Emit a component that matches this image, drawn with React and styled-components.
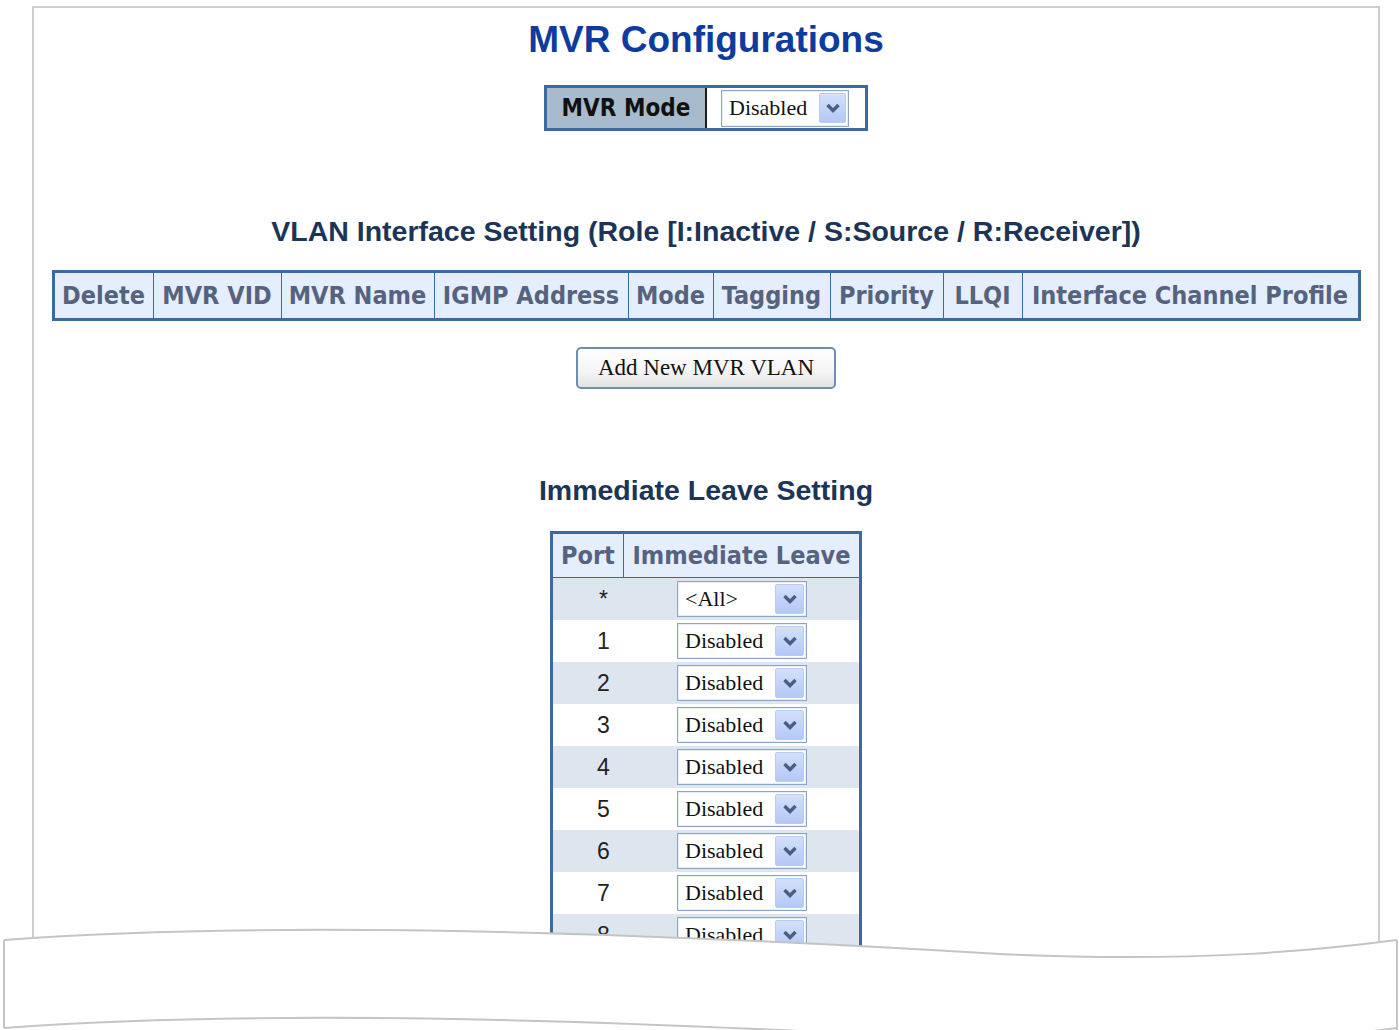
import React from 'react';
import styled, { createGlobalStyle } from 'styled-components';

const GlobalStyle = createGlobalStyle`
  html, body {
    margin: 0;
    padding: 0;
    background: #ffffff;
  }
`;

const Page = styled.div`
  position: relative;
  width: 1399px;
  height: 1030px;
  overflow: hidden;
  background: #fff;
`;

const Frame = styled.div`
  box-sizing: border-box;
  margin: 6px 0 0 32px;
  width: 1348px;
  height: 1100px;
  border: 2px solid #cdcdcd;
  border-bottom: none;
  display: flex;
  flex-direction: column;
  align-items: center;
`;

const Title = styled.h1`
  margin: 12px 0 0;
  font-family: "Liberation Sans", Arial, sans-serif;
  font-size: 37px;
  line-height: 40px;
  font-weight: bold;
  color: #0d3c9e;
`;

const SectionTitle = styled.h2`
  margin: ${p => p.$top}px 0 0;
  font-family: "Liberation Sans", Arial, sans-serif;
  font-size: 28.5px;
  line-height: 32px;
  font-weight: bold;
  color: #1c3557;
`;

const headFont = `
  font-family: "DejaVu Sans Condensed", "DejaVu Sans", sans-serif;
  font-stretch: condensed;
  font-weight: bold;
  font-size: 25px;
`;

const ModeTable = styled.div`
  margin-top: 25px;
  display: flex;
  height: 46px;
  box-sizing: border-box;
  border: 3px solid #3a6aa0;
`;

const ModeLabel = styled.div`
  font-family: "DejaVu Sans Condensed", "DejaVu Sans", sans-serif;
  font-stretch: condensed;
  font-weight: bold;
  font-size: 24px;
  width: 158px;
  background: #a8bbcc;
  color: #111;
  border-right: 2px solid #1e1e1e;
  display: flex;
  align-items: center;
  justify-content: center;
`;

const ModeValue = styled.div`
  width: 158px;
  box-sizing: border-box;
  padding-left: 14px;
  display: flex;
  align-items: center;
  background: #fff;
`;

const SelectBox = styled.div`
  box-sizing: border-box;
  width: ${p => p.$w}px;
  height: ${p => p.$h}px;
  border: 1px solid #8aa6c4;
  box-shadow: inset 0 0 0 1px #e9eef5;
  background: #fff;
  display: flex;
  align-items: center;
  justify-content: space-between;
  padding: 0 2px 0 7px;
  font-family: "Liberation Serif", "Times New Roman", serif;
  font-size: 22px;
  color: #111;
`;

const ArrowButton = styled.span`
  box-sizing: border-box;
  width: ${p => p.$w}px;
  height: 30px;
  border: 1px solid #b9cbee;
  border-radius: 2px;
  background: linear-gradient(#d3e0fb, #b3c8f5);
  display: flex;
  align-items: center;
  justify-content: center;
`;

const Chevron = () => (
  <svg width="16" height="12" viewBox="0 0 16 12">
    <path d="M2.5 3 L8 8.5 L13.5 3" fill="none" stroke="#4a5d82" strokeWidth="3.4" />
  </svg>
);

const Select = ({ value, w = 130, h = 36, aw = 29 }) => (
  <SelectBox $w={w} $h={h}>
    <span>{value}</span>
    <ArrowButton $w={aw}>
      <Chevron />
    </ArrowButton>
  </SelectBox>
);

const VlanTable = styled.div`
  margin-top: 23px;
  box-sizing: border-box;
  width: 1309px;
  height: 51px;
  border: 3px solid #3a6aa0;
  display: grid;
  grid-template-columns: 98px 127px 152px 193px 84px 116px 112px 78px 335px;
  gap: 1px;
  background: #3a6aa0;
`;

const HeadCell = styled.div`
  ${headFont}
  background: #e4eefc;
  color: #56637f;
  display: flex;
  align-items: center;
  justify-content: center;
  white-space: nowrap;
`;

const AddButton = styled.button`
  margin-top: 26px;
  width: 260px;
  height: 42px;
  border: 2px solid #6f8db3;
  border-radius: 5px;
  background: linear-gradient(#ffffff 0%, #f4f4f4 60%, #e3e3e3 100%);
  font-family: "Liberation Serif", "Times New Roman", serif;
  font-size: 23px;
  color: #111;
  padding: 0;
`;

const LeaveTable = styled.div`
  margin-top: 25px;
  box-sizing: border-box;
  width: 312px;
  border: 3px solid #3a6aa0;
  border-bottom: none;
`;

const LeaveHead = styled.div`
  display: grid;
  grid-template-columns: 70px 235px;
  gap: 1px;
  height: 44px;
  background: #3a6aa0;
  border-bottom: 1px solid #3a6aa0;
  box-sizing: border-box;
`;

const LeaveRow = styled.div`
  display: grid;
  grid-template-columns: 101px 1fr;
  align-items: center;
  height: 42px;
  background: ${p => (p.$alt ? '#dde6ef' : '#ffffff')};
`;

const PortCell = styled.div`
  text-align: center;
  font-family: "Liberation Sans", Arial, sans-serif;
  font-size: 23px;
  color: #222;
`;

const SelectCell = styled.div`
  padding-left: 23px;
`;

const TornEdge = styled.svg`
  position: absolute;
  left: 0;
  top: 900px;
`;

const columns = ['Delete', 'MVR VID', 'MVR Name', 'IGMP Address', 'Mode', 'Tagging', 'Priority', 'LLQI', 'Interface Channel Profile'];

const ports = ['*', '1', '2', '3', '4', '5', '6', '7', '8'];

const topEdge = 'M4 940 C 300 918, 700 936, 1000 954 C 1200 963, 1320 950, 1397 940';
const bottomEdge = 'M4 1028 C 300 1006, 700 1024, 1000 1042 C 1200 1051, 1320 1038, 1397 1028';

export default function App() {
  return (
    <Page>
      <GlobalStyle />
      <Frame>
        <Title>MVR Configurations</Title>

        <ModeTable>
          <ModeLabel>MVR Mode</ModeLabel>
          <ModeValue>
            <Select value="Disabled" w={128} h={37} aw={27} />
          </ModeValue>
        </ModeTable>

        <SectionTitle $top={84}>VLAN Interface Setting (Role [I:Inactive / S:Source / R:Receiver])</SectionTitle>

        <VlanTable>
          {columns.map(c => (
            <HeadCell key={c}>{c}</HeadCell>
          ))}
        </VlanTable>

        <AddButton type="button">Add New MVR VLAN</AddButton>

        <SectionTitle $top={85}>Immediate Leave Setting</SectionTitle>

        <LeaveTable>
          <LeaveHead>
            <HeadCell>Port</HeadCell>
            <HeadCell>Immediate Leave</HeadCell>
          </LeaveHead>
          {ports.map((p, i) => (
            <LeaveRow key={p} $alt={i % 2 === 0}>
              <PortCell>{p}</PortCell>
              <SelectCell>
                <Select value={p === '*' ? '<All>' : 'Disabled'} />
              </SelectCell>
            </LeaveRow>
          ))}
        </LeaveTable>
      </Frame>

      <TornEdge width="1399" height="130" viewBox="0 900 1399 130">
        <path d={`${topEdge} L 1397 1040 L 4 1040 Z`} fill="#ffffff" />
        <path d={topEdge} fill="none" stroke="#c4c4c4" strokeWidth="2" />
        <path d="M4 940 L 4 1028" fill="none" stroke="#c4c4c4" strokeWidth="2" />
        <path d="M1397 940 L 1397 1030" fill="none" stroke="#c4c4c4" strokeWidth="2" />
        <path d={bottomEdge} fill="none" stroke="#c4c4c4" strokeWidth="2" />
      </TornEdge>
    </Page>
  );
}
